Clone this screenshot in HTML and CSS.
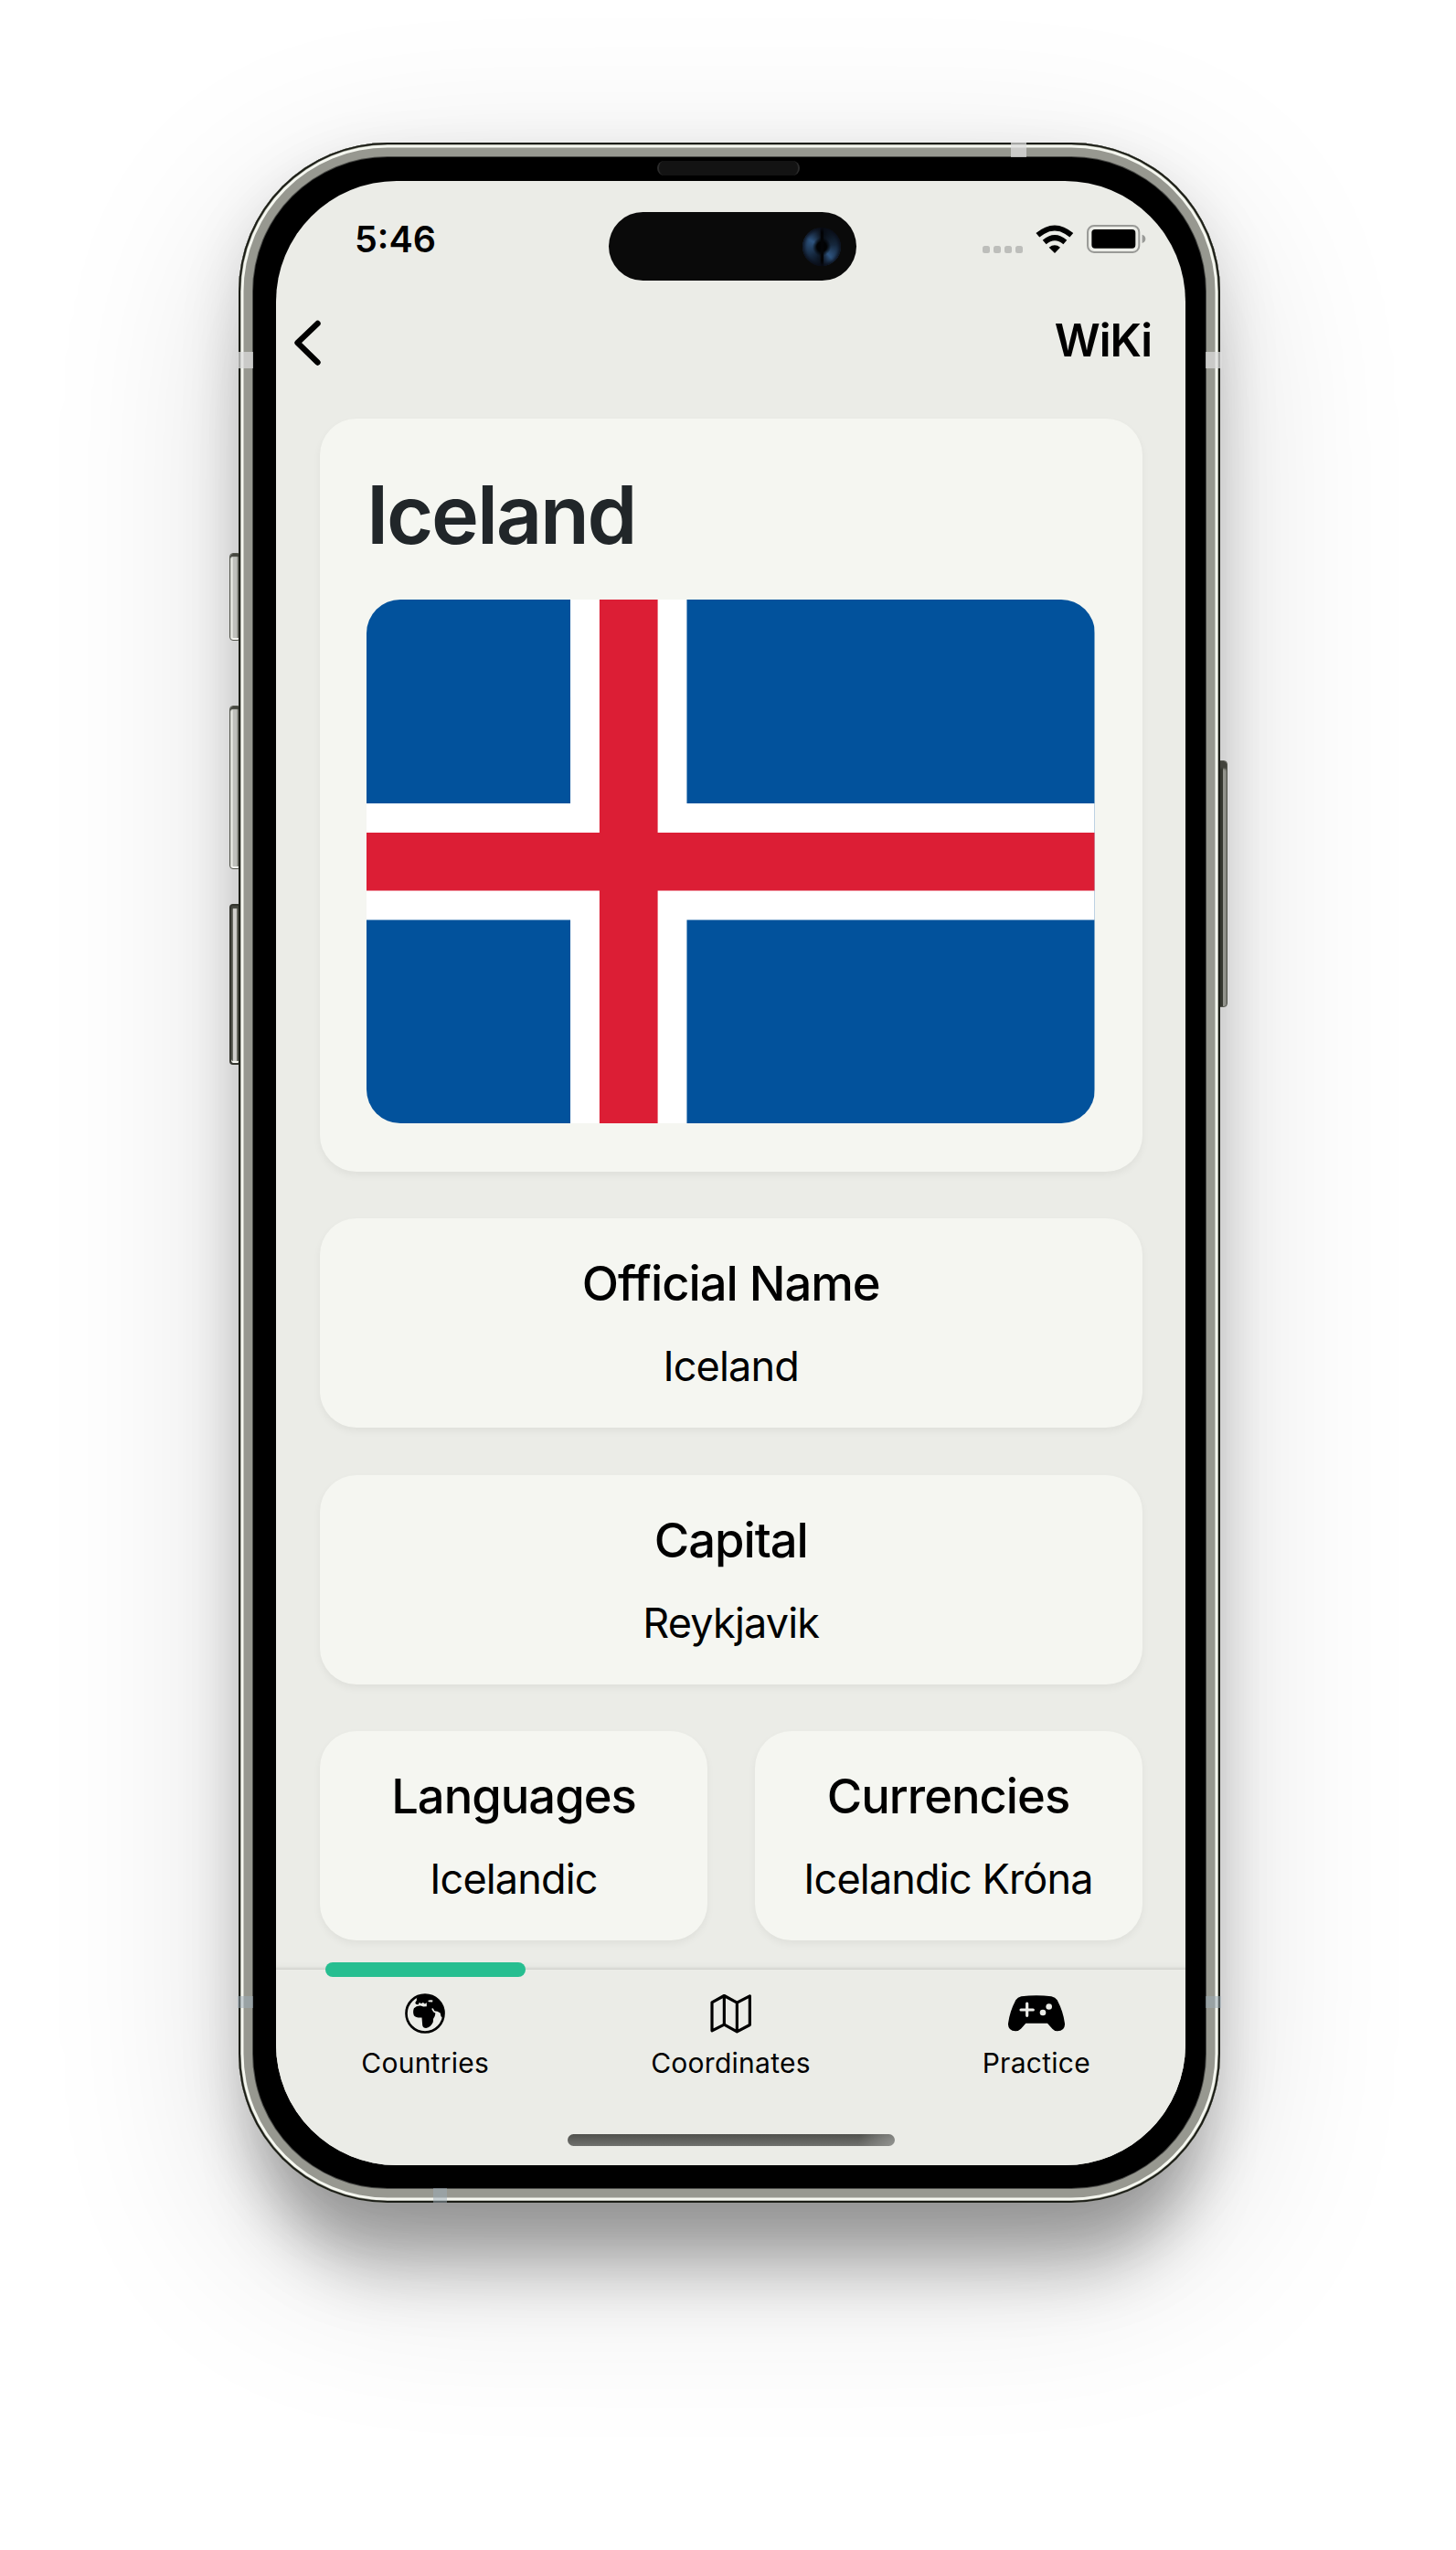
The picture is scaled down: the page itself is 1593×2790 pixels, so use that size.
FILE: index.html
```html
<!DOCTYPE html>
<html lang="en">
<head>
<meta charset="utf-8">
<title>Iceland</title>
<link rel="stylesheet" href="styles.css">
</head>
<body>
<main class="stage">
  <div class="phone">
    <span class="key key-action"></span>
    <span class="key key-up"></span>
    <span class="key key-down"></span>
    <span class="key key-power"></span>
    <div class="frame">
      <span class="speaker"></span>
      <div class="screen">
        <header class="status">
          <span class="time">5:46</span>
          <span class="island"><span class="camera"></span></span>
          <div class="indicators">
            <span class="dots"><i></i><i></i><i></i><i></i></span>
            <svg class="wifi" viewBox="581 315 125 94"><g fill="none" stroke="#000" stroke-width="18"><path d="M588 349Q644 302 699 349"/><path d="M610 372Q644 343 678 372"/></g><path d="M625 389Q644 374 662 389L644 408Z"/></svg>
            <svg class="battery" viewBox="749 318 195 94"><rect x="752" y="321" width="169" height="87" rx="21" fill="none" stroke="#999a97" stroke-width="6"/><rect x="765" y="333" width="144" height="62" rx="11"/><path d="M931 350Q942 353 942 364Q942 375 931 378Z" fill="#999a97"/></svg>
          </div>
        </header>
        <nav class="nav">
          <svg class="back" viewBox="0 0 30 50"><path d="M26.5 4L4.5 25L26.5 46.5" fill="none" stroke="#000" stroke-width="6.4" stroke-linecap="round" stroke-linejoin="round"/></svg>
          <span class="wiki">WiKi</span>
        </nav>
        <section class="content">
          <article class="card hero">
            <h1>Iceland</h1>
            <svg class="flag" viewBox="0 0 25 18" preserveAspectRatio="none"><path fill="#02529c" d="M0 0H25V18H0Z"/><path fill="#fff" d="M7 0H11V7H25V11H11V18H7V11H0V7H7Z"/><path fill="#dc1e35" d="M8 0H10V8H25V10H10V18H8V10H0V8H8Z"/></svg>
          </article>
          <article class="card info"><h2>Official Name</h2><p>Iceland</p></article>
          <article class="card info"><h2>Capital</h2><p>Reykjavik</p></article>
          <div class="pair">
            <article class="card info"><h2>Languages</h2><p>Icelandic</p></article>
            <article class="card info"><h2>Currencies</h2><p>Icelandic Króna</p></article>
          </div>
        </section>
        <footer class="tabs">
          <a class="tab active">
            <svg class="globe" viewBox="611 182 133 133"><circle cx="677.5" cy="248.500" r="62" fill="none" stroke="#000" stroke-width="8"/><path d="M650 199L655 192Q678 181 706 191Q735 206 742 240Q742 255 734 262Q729 258 728 247Q719 240 709 240L704 231L699 233L705 243L712 248Q711 259 705 266L704 277Q696 294 681 297Q671 297 669 288L667 262Q647 263 641 255Q636 243 641 231Q649 222 663 223L672 226L683 225V213L677 217L671 212L665 216L659 212L655 219Q646 220 645 213L650 205Z"/><path d="M687 206Q695 202 703 205L702 211L690 210Z" fill="#ebece7"/></svg>
            <span>Countries</span>
          </a>
          <a class="tab">
            <svg class="map" viewBox="531 183 135 131"><path d="M537 212L577 190L619 213L661 191V286L619 308L577 285L537 305ZM577 190V285M619 213V308" fill="none" stroke="#000" stroke-width="9.500" stroke-linejoin="round"/></svg>
            <span>Coordinates</span>
          </a>
          <a class="tab">
            <svg class="pad" viewBox="429 182 186 132"><path d="M454 204Q460 195 472 192Q522 186 571 192Q584 195 590 204Q610 242 615 281Q616 305 591 306Q581 306 574 298L558 280H487L471 298Q463 306 453 306Q428 304 429 281Q434 242 454 204Z"/><path d="M491 215V255M471 236H511" stroke="#ebece7" stroke-width="9.500" stroke-linecap="round"/><circle cx="563" cy="225.500" r="10" fill="#ebece7"/><circle cx="543" cy="245" r="10" fill="#ebece7"/></svg>
            <span>Practice</span>
          </a>
        </footer>
        <span class="home"></span>
      </div>
    </div>
    <span class="band band-top"></span>
    <span class="band band-left"></span>
    <span class="band band-right"></span>
    <span class="band cool band-left-low"></span>
    <span class="band cool band-right-low"></span>
    <span class="band cool band-bottom"></span>
  </div>
</main>
</body>
</html>
```
FILE: styles.css
```css
* { box-sizing: border-box; }
body { margin: 0; background: #fff; font-family: Inter, "Liberation Sans", sans-serif; color: #000; }
h1, h2, p { margin: 0; }
svg { display: block; }

.stage { height: 2790px; padding: 156px 0 0 261px; overflow: hidden; }
.phone {
  position: relative; width: 1074px; height: 2254px; border-radius: 163px;
  box-shadow: 0 60px 210px rgba(0,0,0,.15), 0 25px 65px rgba(0,0,0,.15), 0 105px 70px -32px rgba(0,0,0,.25);
}
.frame {
  position: relative; height: 100%; border-radius: 163px; padding: 42px 38px 41.5px 41px; background: #000;
  box-shadow: inset 0 0 0 2px #1c1e17, inset 0 0 0 2.6px #8a8c80, inset 0 0 0 5.500px #f5f7f0, inset 0 0 0 15px #979890, inset 0 0 0 16px #4a4b48;
}
.screen {
  position: relative; height: 100%; display: flex; flex-direction: column; overflow: hidden;
  border-radius: 132px; background: #ebece7;
}

/* side buttons */
.key { position: absolute; border: 1.500px solid #55574e; }
.key-action, .key-up, .key-down { left: -10px; width: 13px; border-radius: 4px; background: linear-gradient(90deg, #e4e6df 0 20%, #bfc0bb 30% 60%, #72746b 80%); box-shadow: inset 0 3px 1px #45463f, inset 0 -2px 0 #f5f5f0; }
.key-action { top: 449px; height: 96px; }
.key-up { top: 616px; height: 179px; }
.key-down { top: 833px; height: 176px; border-width: 2px; border-color: #34352e; background: linear-gradient(90deg, #55574e 15%, #d0cfcb 25% 60%, #55574e 75%); }
.key-power { left: 1070px; top: 676px; width: 11.500px; height: 270px; border-radius: 4px; background: linear-gradient(90deg, #34362e 60%, #94958e 65%); box-shadow: inset 0 8px 2px #42433c; }

/* antenna bands */
.band { position: absolute; background: rgba(222,222,222,.72); }
.band-top { left: 845px; top: 0; width: 17px; height: 16px; }
.band-left { left: -1px; top: 229px; width: 17px; height: 18px; }
.band-right { left: 1058px; top: 229px; width: 18px; height: 18px; }
.cool { background: rgba(155,172,184,.5); }
.band-left-low { left: -1px; top: 2028px; width: 17px; height: 13px; }
.band-right-low { left: 1058px; top: 2028px; width: 17px; height: 13px; }
.band-bottom { left: 213px; top: 2238px; width: 15px; height: 16px; }

.speaker { position: absolute; left: 458px; top: 20px; width: 156px; height: 16px; border-radius: 8px; background: #131313; border: solid #2b2b2b; border-width: 0 2px; }

.status { height: 114px; flex: none; padding: 0 43px 0 86px; display: flex; justify-content: space-between; align-items: center; }
.time { font-size: 39.500px; font-weight: 600; line-height: 48px; margin-top: 13px; }
.island { position: absolute; left: 364px; top: 34px; width: 270.500px; height: 74.500px; border-radius: 37.500px; background: #0a0a0a; }
.camera { position: absolute; right: 17px; top: 17px; width: 42px; height: 42px; border-radius: 50%; background: linear-gradient(90deg, transparent 46%, #030406 48% 54%, transparent 56%), radial-gradient(circle, #010203 18%, transparent 34%), conic-gradient(from 0deg, #070a10, #16283d 80deg, #2f5580 140deg, #0a0f18 180deg, #14253a 220deg, #2f5580 300deg, #0a0d14); box-shadow: inset 0 0 4px 2px #0a0d18; }
.indicators { display: flex; align-items: flex-end; height: 32px; margin-top: 13px; }
.dots { display: flex; gap: 4px; padding-bottom: 1px; margin-right: 14px; }
.dots i { width: 8px; height: 8px; border-radius: 2.500px; background: #bdbebb; }
.wifi { width: 41.700px; height: 31.300px; margin-right: 14.300px; }
.battery { width: 65px; height: 31.300px; }

.nav { height: 126px; flex: none; padding: 0 37px 0 19px; display: flex; align-items: center; justify-content: space-between; }
.back { width: 30px; height: 50px; }
.wiki { font-size: 49px; font-weight: 600; line-height: 60px; margin-top: -4px; letter-spacing: -1.08px; }

.content { flex: none; padding: 20px 47.500px 0 48px; display: flex; flex-direction: column; gap: 51.500px; }
.card { border-radius: 40px; background: #f5f6f1; box-shadow: 0 4px 8px rgba(0,0,0,.05); }
.hero { height: 823.500px; padding: 52px 51px 0 51px; }
h1 { font-size: 88px; font-weight: 600; line-height: 106px; color: #212629; letter-spacing: -2.26px; }
.flag { width: 796.500px; height: 573.500px; margin-top: 39.700px; border-radius: 37px; }
.info { height: 229px; padding-top: 40px; text-align: center; }
h2 { font-size: 52.500px; font-weight: 500; line-height: 62px; letter-spacing: -1px; }
.info p { margin-top: 33px; font-size: 45px; line-height: 54px; white-space: nowrap; letter-spacing: -.83px; }
.pair { display: grid; grid-template-columns: 1fr 1fr; gap: 51.500px; }

.tabs { position: absolute; left: -4px; right: -4px; top: 1956.500px; bottom: 0; display: grid; grid-template-columns: repeat(3, 1fr); background: #ebece7; box-shadow: 0 -1px 3px rgba(0,0,0,.12), 0 -3px 8px rgba(0,0,0,.04); }
.tab { position: relative; padding-top: 26.500px; display: flex; flex-direction: column; align-items: center; gap: 13.500px; font-size: 30px; line-height: 36px; letter-spacing: .26px; }
.active::before { content: ""; position: absolute; left: 58px; top: -7.500px; width: 219px; height: 16px; border-radius: 8px; background: #26be90; }
.globe { width: 44px; height: 44px; }
.map { width: 45px; height: 44px; }
.pad { width: 62px; height: 44px; }
.home { position: absolute; left: 319px; top: 2137px; width: 358px; height: 13px; border-radius: 6.500px; background: radial-gradient(circle at 100% 100%, rgba(150,151,148,.9), transparent 40px), linear-gradient(#50514d, #70716e); }
```
